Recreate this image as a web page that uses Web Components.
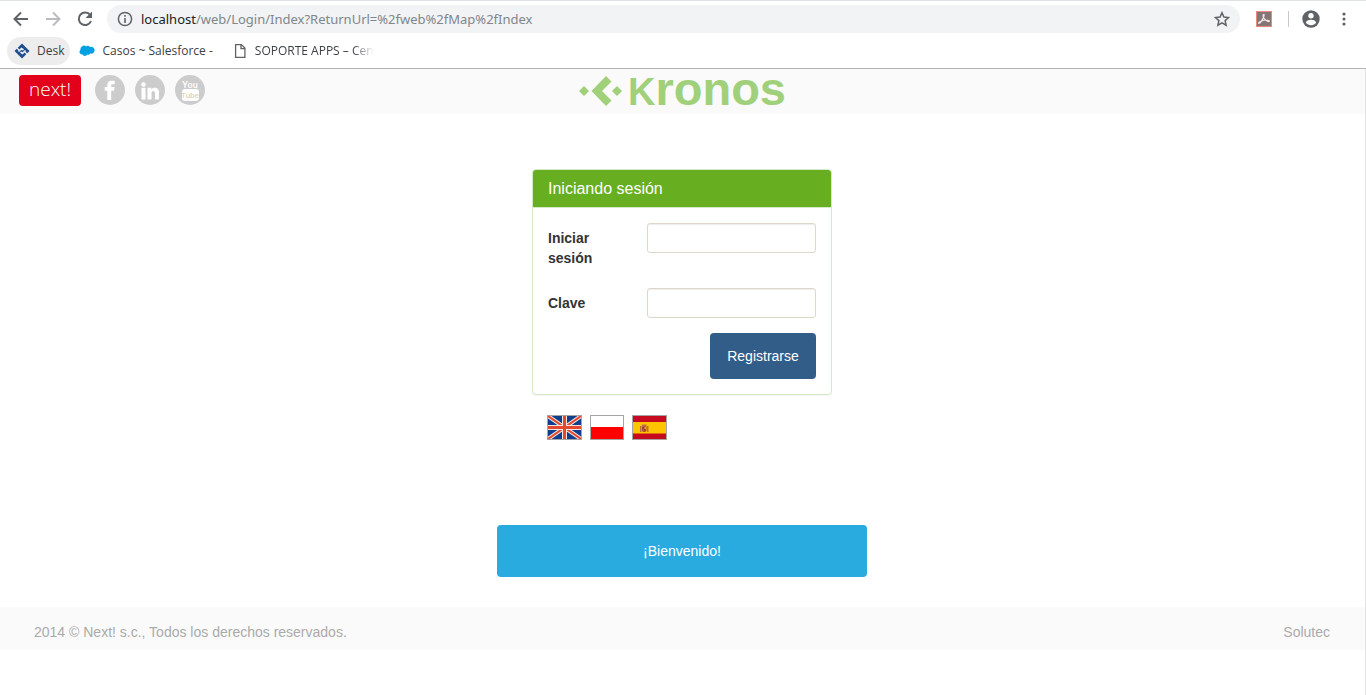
<!DOCTYPE html>
<html lang="es">
<head>
<meta charset="utf-8">
<title>Kronos</title>
<style>
  body { margin: 0; background: #fff; font: 14px/20px "Liberation Sans", Arial, sans-serif; color: #333; }
</style>
</head>
<body>
<browser-toolbar></browser-toolbar>
<browser-bookmarks></browser-bookmarks>
<kronos-page>
  <kronos-header slot="header"></kronos-header>
  <login-panel></login-panel>
  <language-flags></language-flags>
  <welcome-banner>¡Bienvenido!</welcome-banner>
  <kronos-footer slot="footer">
    <span>2014 © Next! s.c., Todos los derechos reservados.</span>
    <span slot="end">Solutec</span>
  </kronos-footer>
</kronos-page>

<script>
const define = (name, html) => {
  const template = document.createElement('template');
  template.innerHTML = '<style>*{box-sizing:border-box}button{font:inherit}svg{display:block}</style>' + html;
  customElements.define(name, class extends HTMLElement {
    constructor() {
      super();
      this.attachShadow({ mode: 'open' }).append(template.content.cloneNode(true));
    }
  });
};

define('browser-toolbar', `
<style>
  :host { display: flex; align-items: center; height: 37px; box-sizing: border-box; padding: 0 10px 0 9px; border-top: 1px solid #dee1e6; font: 13px/20px "Noto Sans", sans-serif; color: #5f6368; }
  button { border: 0; padding: 0; background: none; color: inherit; width: 24px; height: 24px; display: grid; place-items: center; flex: none; }
  nav { display: flex; gap: 8px; margin-right: 10px; }
  .off { color: #babcbe; }
  .address { flex: 1; min-width: 0; height: 28px; border-radius: 14px; background: #f1f3f4; display: flex; align-items: center; padding: 0 6px 0 10px; gap: 8px; }
  .url { flex: 1; min-width: 0; white-space: nowrap; overflow: hidden; color: #80868b; }
  .url b { font-weight: 400; color: #202124; }
  .tools { display: flex; align-items: center; margin-left: 12px; }
  .line { width: 1px; height: 16px; background: #c8cacd; margin: 0 10px 0 12px; }
  .more { margin-left: 9px; }
</style>
<nav>
  <button aria-label="Atrás"><svg width="18" height="18" viewBox="0 0 18 18" fill="none" stroke="currentColor" stroke-width="2"><path d="M16 9H3M9 2.5 2.5 9 9 15.5"/></svg></button>
  <button class="off" aria-label="Adelante"><svg width="18" height="18" viewBox="0 0 18 18" fill="none" stroke="currentColor" stroke-width="2"><path d="M2 9h13M9 2.500 15.500 9 9 15.500"/></svg></button>
  <button aria-label="Recargar"><svg width="18" height="18" viewBox="0 0 18 18"><path d="M14.200 5A6.300 6.300 0 1 0 15 11" fill="none" stroke="currentColor" stroke-width="2"/><path d="M16 1.500V8H9.500z" fill="currentColor"/></svg></button>
</nav>
<div class="address">
  <svg width="16" height="16" viewBox="0 0 16 16"><circle cx="8" cy="8" r="6.600" fill="none" stroke="#5f6368" stroke-width="1.500"/><path d="M7.200 7h1.600v5H7.200zM7.200 4h1.600v1.700H7.200z" fill="#5f6368"/></svg>
  <span class="url"><b>localhost</b>/web/Login/Index?ReturnUrl=%2fweb%2fMap%2fIndex</span>
  <button aria-label="Añadir a favoritos"><svg width="16" height="16" viewBox="0 0 16 16"><path d="m8 1.700 1.900 4.300 4.700.5-3.500 3.100 1 4.600L8 11.800l-4.100 2.400 1-4.600-3.500-3.100 4.700-.5z" fill="none" stroke="#5f6368" stroke-width="1.500"/></svg></button>
</div>
<div class="tools">
  <button aria-label="PDF"><svg width="16" height="16" viewBox="0 0 16 16"><rect x=".5" y=".5" width="15" height="15" fill="#857675" stroke="#e88b7d"/><path d="M7.500 3.500c1.500-1 0 3.500-1.300 5.400-1.100 1.800-2.800 4-3.500 3.500-.6-1 3-3 5.600-3.200 2-.2 5.200-.1 5 1.100-.8.900-4-1-5.100-2.600-1-1.400-1.600-3.600-.7-4.200" fill="none" stroke="#ebe4e3" stroke-width="1.200"/></svg></button>
  <span class="line"></span>
  <button aria-label="Perfil"><svg width="18" height="18" viewBox="0 0 18 18"><circle cx="9" cy="9" r="8.700" fill="#5f6368"/><circle cx="9" cy="5.700" r="2.700" fill="#fff"/><path d="M3.800 12.400c.6-1.900 3.300-2.600 5.200-2.600s4.600.7 5.200 2.600a6.300 6.300 0 0 1-10.400 0z" fill="#fff"/></svg></button>
  <button class="more" aria-label="Menú"><svg width="4" height="14" viewBox="0 0 4 14" fill="#5f6368"><circle cx="2" cy="2" r="1.600"/><circle cx="2" cy="7" r="1.600"/><circle cx="2" cy="12" r="1.600"/></svg></button>
</div>`);

define('browser-bookmarks', `
<style>
  :host { display: flex; align-items: center; height: 32px; box-sizing: border-box; padding: 0 7px 3px; border-bottom: 1px solid #b3b3b3; font: 12px/16px "Open Sans", sans-serif; color: #3c4043; }
  a { display: flex; align-items: center; height: 28px; padding: 0 6px 0 7px; gap: 7px; border-radius: 14px; color: inherit; text-decoration: none; white-space: nowrap; }
  a.on { background: #ededee; }
  a + a { margin-left: 2px; }
  .fade { -webkit-mask-image: linear-gradient(90deg, #000 82%, transparent); mask-image: linear-gradient(90deg, #000 82%, transparent); }
  a.page { margin-left: 6px; }
</style>
<a class="on" href="#desk"><svg width="16" height="16" viewBox="0 0 16 16"><path d="M8 .5 15.500 8 8 15.500.5 8z" fill="#1f4e8f"/><path d="m4.500 8.500 3-3 2 1.500M11.500 7.500l-3 3-2-1.500" fill="none" stroke="#e8edf4" stroke-width="1.600"/><path d="m2.500 4.500 3 3M10.500 8.500l3 3" stroke="#ededee" stroke-width="1.300"/></svg>Desk</a>
<a href="#casos"><svg width="16" height="16" viewBox="0 0 16 16"><path d="M3 3.500C4.300 2 6 2.200 7 3.500c1.200-1.300 3-1 3.800.4 2.400-.8 4.800.6 4.800 3.200s-2.400 4.200-4.400 3.500c-.6 1.200-2 1.500-3 1-1 1.900-3.700 1.600-4.400-.2C1.700 11.700.2 10.200.5 8.500c.1-.8.500-1.500 1-1.800C1.200 5.500 2 4 3 3.500z" fill="#00a1e0"/></svg><span>Casos ~ Salesforce -</span></a>
<a class="page" href="#soporte"><svg width="16" height="16" viewBox="0 0 16 16" fill="none" stroke="#5f6368" stroke-width="1.300"><path d="M3.600 1.600h5.800l3.500 3.500v9.300H3.600zM9 1.600v4h4"/></svg><span class="fade">SOPORTE APPS – Cen</span></a>`);

define('kronos-page', `
<style>
  :host { display: block; min-height: calc(100vh - 69px); box-sizing: border-box; border-right: 1px solid #e3e3e3; }
  main { display: flex; flex-direction: column; align-items: center; padding: 55px 1px 30px 0; }
</style>
<slot name="header"></slot><main><slot></slot></main><slot name="footer"></slot>`);

define('kronos-header', `
<style>
  :host { display: grid; grid-template-columns: 1fr auto 1fr; align-items: start; height: 45px; box-sizing: border-box; padding: 6px 19px 0; background: #fafafa; }
  a { display: block; color: #fff; text-decoration: none; }
  .social { display: flex; align-items: flex-start; gap: 10px; }
  .next { width: 62px; height: 31px; margin-right: 4px; border-radius: 4px; background: #e2001a; font: 300 19px/29px "Open Sans", sans-serif; text-align: center; }
  svg.round { width: 30px; height: 30px; }
  .brand { display: flex; align-items: center; gap: 5px; color: #a1d07a; height: 31px; }
  .name { font-weight: 700; font-size: 47px; line-height: 31px; white-space: nowrap; }
  .name small { font-size: 38px; }
</style>
<div class="social">
  <a class="next" href="#next">next!</a>
  <a href="#facebook" aria-label="Facebook"><svg class="round" viewBox="0 0 30 30"><circle cx="15" cy="15" r="15" fill="#ccc"/><path d="M12.300 25v-9.200H9.700v-3.700h2.600V9.900c0-2.700 1.600-4.100 4.200-4.100h3.200v3.500h-2c-1 0-1.500.5-1.500 1.300v1.500h3.400l-.5 3.700h-2.900V25z" fill="#fff"/></svg></a>
  <a href="#linkedin" aria-label="LinkedIn"><svg class="round" viewBox="0 0 30 30"><circle cx="15" cy="15" r="15" fill="#ccc"/><g fill="#fff"><circle cx="8.500" cy="9.500" r="2.200"/><path d="M6.500 12.800h4V24.500h-4zM12.500 12.800h3.700v1.600c1.700-2.700 7.800-2.700 7.800 2.900v7.200h-4v-6.400c0-2.900-3.500-2.700-3.500 0v6.400h-4z"/></g></svg></a>
  <a href="#youtube" aria-label="YouTube"><svg class="round" viewBox="0 0 30 30"><circle cx="15" cy="15" r="15" fill="#ccc"/><rect x="7" y="14" width="17" height="12" rx="3" fill="#fff"/><g font-family="Roboto, sans-serif" font-weight="500" text-anchor="middle"><text x="15" y="13" font-size="9" fill="#fff">You</text><text x="15" y="23" font-size="8" fill="#ddd2c2">Tube</text></g></svg></a>
</div>
<div class="brand" role="img" aria-label="Kronos">
  <svg width="44" height="32" viewBox="0 0 44 32" fill="currentColor"><path d="m5 11 5 5-5 5-5-5zM38 11l5 5-5 5-5-5zM27 1l5.500 5.500L23 16l9.500 9.500L27 31 12.500 16z"/></svg>
  <span class="name"><small>K</small>ronos</span>
</div>`);

define('form-field', `
<style>
  :host { display: grid; grid-template-columns: 84px 1fr; column-gap: 15px; align-items: start; }
  label { padding-top: 5px; font-weight: 700; }
  input { width: 100%; min-width: 0; height: 30px; padding: 5px 10px; border: 1px solid #dfd7ca; border-radius: 3px; background: #fff; font: inherit; box-shadow: inset 0 1px 1px rgba(0,0,0,.075); }
</style>
<label for="field"><slot></slot></label><input id="field">`);

define('login-panel', `
<style>
  :host { display: block; width: 300px; box-sizing: border-box; border: 1px solid #d6e9c6; border-radius: 4px; background: #fff; box-shadow: 0 1px 1px rgba(0,0,0,.05); }
  h1 { margin: 0; height: 38px; padding: 0 15px; background: #67ae20; color: #fff; font-size: 16px; font-weight: 400; line-height: 37px; border-bottom: 1px solid #d6e9c6; border-radius: 3px 3px 0 0; }
  form { display: flex; flex-direction: column; padding: 15px; }
  form-field + form-field { margin-top: 20px; }
  button { align-self: flex-end; width: 106px; height: 46px; margin-top: 15px; padding: 0; border: 0; border-radius: 4px; background: #325d88; color: #fff; }
</style>
<h1>Iniciando sesión</h1>
<form>
  <form-field>Iniciar sesión</form-field>
  <form-field>Clave</form-field>
  <button type="button">Registrarse</button>
</form>`);

define('language-flags', `
<style>
  :host { display: flex; gap: 8px; width: 300px; box-sizing: border-box; padding-left: 15px; margin-top: 20px; }
  a { border: 1px solid #a5a5a5; }
</style>
<a href="#en" aria-label="English"><svg width="33" height="23" viewBox="0 0 33 23"><path fill="#0f3f8c" d="M0 0h33v23H0z"/><path d="m0 0 33 23M33 0 0 23" stroke="#f3e6e4" stroke-width="4"/><path d="m0 0 33 23M33 0 0 23" stroke="#e2492f" stroke-width="2"/><path d="M16.500 0v23M0 11.500h33" stroke="#f3e6e4" stroke-width="5"/><path d="M16.500 0v23M0 11.500h33" stroke="#e2492f" stroke-width="3"/></svg></a>
<a href="#pl" aria-label="Polski"><svg width="32" height="23" viewBox="0 0 32 23"><path fill="#fff" d="M0 0h32v12H0z"/><path fill="#f00" d="M0 11h32v12H0z"/></svg></a>
<a href="#es" aria-label="Español"><svg width="33" height="23" viewBox="0 0 33 23"><path fill="#c60b1e" d="M0 0h33v23H0z"/><path fill="#ffc400" d="M0 6h33v11.500H0z"/><path fill="#b3734a" d="M7 10h1.500v6H7zM14 10h1.500v6H14zM9 8.500h4.500V10H9z"/><path fill="#a8402c" d="M9 10.300h4.500v4c0 2.300-4.500 2.300-4.500 0z"/><path fill="#d9a05b" d="M11.500 11H13v2h-1.500z"/><path fill="#8c6b62" d="M9.500 13H11v2H9.500z"/></svg></a>`);

define('welcome-banner', `
<style>
  :host { display: block; width: 370px; max-width: 100%; box-sizing: border-box; margin-top: 85px; padding: 16px; border-radius: 4px; background: #29abe0; color: #fff; text-align: center; }
</style>
<slot></slot>`);

define('kronos-footer', `
<style>
  :host { display: flex; justify-content: space-between; height: 43px; box-sizing: border-box; padding: 15px 35px 8px 34px; background: #fafafa; color: #aaa; }
</style>
<slot></slot><slot name="end"></slot>`);
</script>
</body>
</html>
